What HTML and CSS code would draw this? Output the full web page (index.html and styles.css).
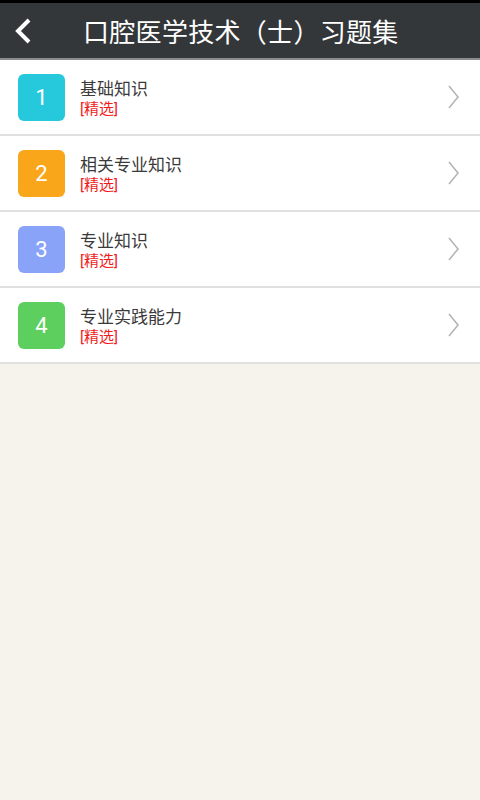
FILE: index.html
```html
<!DOCTYPE html>
<html lang="zh-CN">
<head>
  <meta charset="UTF-8">
  <meta name="viewport" content="width=device-width, initial-scale=1.0">
  <title>口腔医学技术（士）习题集</title>
  <link rel="stylesheet" href="styles.css">
</head>
<body>
  <div class="statusbar"></div>
  <div class="header">
    <span class="back">
      <svg width="20" height="28" viewBox="0 0 20 28"><path d="M15 3 L4 14 L15 25" fill="none" stroke="#fff" stroke-width="4"/></svg>
    </span>
    <h1>口腔医学技术（士）习题集</h1>
  </div>

  <ul class="list">
    <li class="item">
      <span class="num cyan">1</span>
      <div class="text">
        <div class="title">基础知识</div>
        <div class="tag">[精选]</div>
      </div>
      <span class="arrow"><svg width="12" height="24" viewBox="0 0 12 24"><path d="M1 1 L10 12 L1 23" fill="none" stroke="#b5b5b5" stroke-width="1.6"/></svg></span>
    </li>
    <li class="item">
      <span class="num orange">2</span>
      <div class="text">
        <div class="title">相关专业知识</div>
        <div class="tag">[精选]</div>
      </div>
      <span class="arrow"><svg width="12" height="24" viewBox="0 0 12 24"><path d="M1 1 L10 12 L1 23" fill="none" stroke="#b5b5b5" stroke-width="1.6"/></svg></span>
    </li>
    <li class="item">
      <span class="num blue">3</span>
      <div class="text">
        <div class="title">专业知识</div>
        <div class="tag">[精选]</div>
      </div>
      <span class="arrow"><svg width="12" height="24" viewBox="0 0 12 24"><path d="M1 1 L10 12 L1 23" fill="none" stroke="#b5b5b5" stroke-width="1.6"/></svg></span>
    </li>
    <li class="item">
      <span class="num green">4</span>
      <div class="text">
        <div class="title">专业实践能力</div>
        <div class="tag">[精选]</div>
      </div>
      <span class="arrow"><svg width="12" height="24" viewBox="0 0 12 24"><path d="M1 1 L10 12 L1 23" fill="none" stroke="#b5b5b5" stroke-width="1.6"/></svg></span>
    </li>
  </ul>
</body>
</html>
```

FILE: styles.css
```css
html, body {
  margin: 0;
  padding: 0;
  background: #f6f3ec;
  font-family: Roboto, "Noto Sans CJK SC", sans-serif;
  height: 800px;
}

.statusbar {
  height: 3px;
  background: #000;
}

/* top bar */
.header {
  height: 55px;
  background: #33373a;
  border-bottom: 2px solid #8a8d8f;
  display: flex;
  align-items: center;
}

.back {
  width: 20px;
  height: 28px;
  margin-left: 14px;
  display: flex;
}

.header h1 {
  margin: 0 0 0 49px;
  font-size: 26px;
  font-weight: normal;
  color: #fff;
  letter-spacing: 0.3px;
}

/* list */
.list {
  list-style: none;
  margin: 0;
  padding: 0;
  background: #fff;
}

.item {
  height: 74px;
  border-bottom: 2px solid #e0e0e0;
  display: flex;
  align-items: center;
}

.num {
  width: 47px;
  height: 47px;
  margin-left: 18px;
  border-radius: 6px;
  color: #fff;
  font-size: 22px;
  display: flex;
  justify-content: center;
  align-items: center;
}

.cyan { background: #26c9dc; }
.orange { background: #f9a61a; }
.blue { background: #88a3f8; }
.green { background: #5ccf5e; }

.text {
  flex: 1;
  margin-left: 15px;
  padding-top: 3px;
}

.title {
  font-size: 17px;
  color: #3a3a3a;
  line-height: 21px;
}

.tag {
  font-size: 15px;
  color: #f01c1c;
  line-height: 19px;
}

.arrow {
  margin-right: 20px;
  display: flex;
}
```
